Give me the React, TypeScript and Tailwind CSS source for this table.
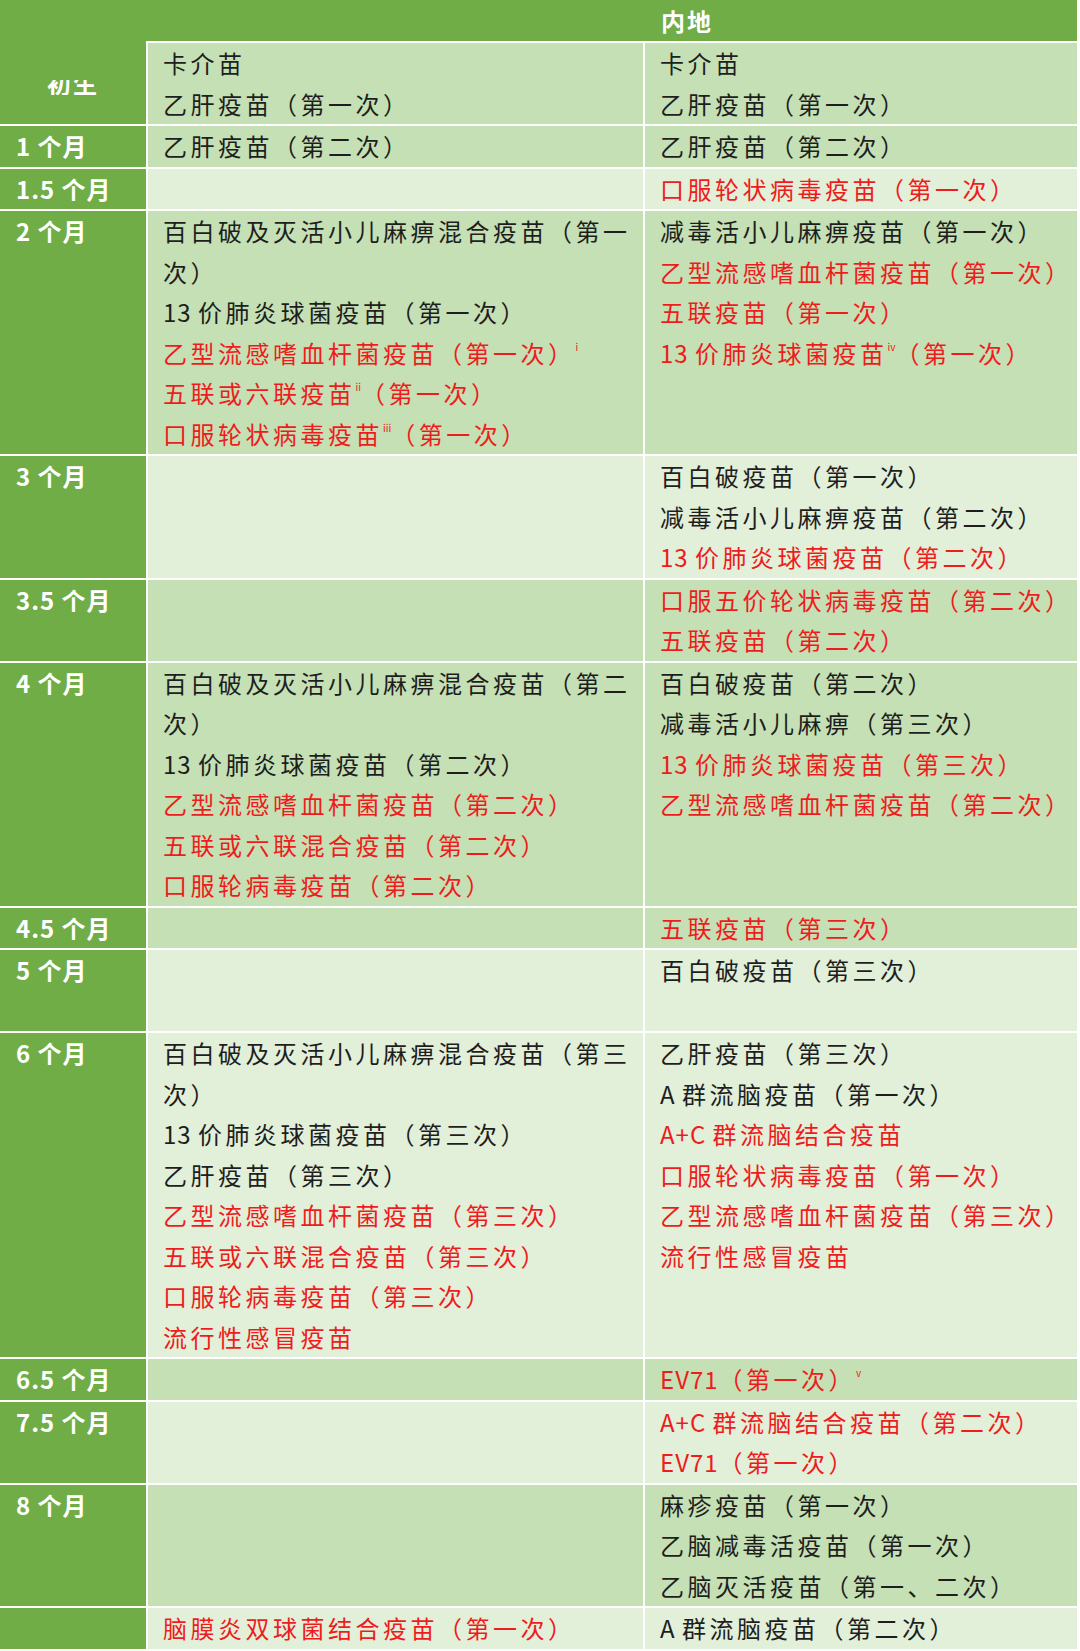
type Line = { t: string; red?: boolean; sup?: string; rest?: string };
type Row = { label: string; tone: "m" | "l"; n: number; left: Line[]; right: Line[] };

const k = (t: string): Line => ({ t });
const r = (t: string, sup?: string, rest?: string): Line => ({ t, red: true, sup, rest });

const rows: Row[] = [
  { label: "1 个月", tone: "m", n: 1, left: [k("乙肝疫苗（第二次）")], right: [k("乙肝疫苗（第二次）")] },
  { label: "1.5 个月", tone: "l", n: 1, left: [], right: [r("口服轮状病毒疫苗（第一次）")] },
  {
    label: "2 个月",
    tone: "m",
    n: 6,
    left: [
      k("百白破及灭活小儿麻痹混合疫苗（第一"),
      k("次）"),
      k("13 价肺炎球菌疫苗（第一次）"),
      r("乙型流感嗜血杆菌疫苗（第一次）", "i"),
      r("五联或六联疫苗", "ii", "（第一次）"),
      r("口服轮状病毒疫苗", "iii", "（第一次）"),
    ],
    right: [
      k("减毒活小儿麻痹疫苗（第一次）"),
      r("乙型流感嗜血杆菌疫苗（第一次）"),
      r("五联疫苗（第一次）"),
      r("13 价肺炎球菌疫苗", "iv", "（第一次）"),
    ],
  },
  {
    label: "3 个月",
    tone: "l",
    n: 3,
    left: [],
    right: [k("百白破疫苗（第一次）"), k("减毒活小儿麻痹疫苗（第二次）"), r("13 价肺炎球菌疫苗（第二次）")],
  },
  {
    label: "3.5 个月",
    tone: "m",
    n: 2,
    left: [],
    right: [r("口服五价轮状病毒疫苗（第二次）"), r("五联疫苗（第二次）")],
  },
  {
    label: "4 个月",
    tone: "m",
    n: 6,
    left: [
      k("百白破及灭活小儿麻痹混合疫苗（第二"),
      k("次）"),
      k("13 价肺炎球菌疫苗（第二次）"),
      r("乙型流感嗜血杆菌疫苗（第二次）"),
      r("五联或六联混合疫苗（第二次）"),
      r("口服轮病毒疫苗（第二次）"),
    ],
    right: [
      k("百白破疫苗（第二次）"),
      k("减毒活小儿麻痹（第三次）"),
      r("13 价肺炎球菌疫苗（第三次）"),
      r("乙型流感嗜血杆菌疫苗（第二次）"),
    ],
  },
  { label: "4.5 个月", tone: "m", n: 1, left: [], right: [r("五联疫苗（第三次）")] },
  { label: "5 个月", tone: "l", n: 2, left: [], right: [k("百白破疫苗（第三次）")] },
  {
    label: "6 个月",
    tone: "l",
    n: 8,
    left: [
      k("百白破及灭活小儿麻痹混合疫苗（第三"),
      k("次）"),
      k("13 价肺炎球菌疫苗（第三次）"),
      k("乙肝疫苗（第三次）"),
      r("乙型流感嗜血杆菌疫苗（第三次）"),
      r("五联或六联混合疫苗（第三次）"),
      r("口服轮病毒疫苗（第三次）"),
      r("流行性感冒疫苗"),
    ],
    right: [
      k("乙肝疫苗（第三次）"),
      k("A 群流脑疫苗（第一次）"),
      r("A+C 群流脑结合疫苗"),
      r("口服轮状病毒疫苗（第一次）"),
      r("乙型流感嗜血杆菌疫苗（第三次）"),
      r("流行性感冒疫苗"),
    ],
  },
  { label: "6.5 个月", tone: "m", n: 1, left: [], right: [r("EV71（第一次）", "v")] },
  {
    label: "7.5 个月",
    tone: "l",
    n: 2,
    left: [],
    right: [r("A+C 群流脑结合疫苗（第二次）"), r("EV71（第一次）")],
  },
  {
    label: "8 个月",
    tone: "m",
    n: 3,
    left: [],
    right: [k("麻疹疫苗（第一次）"), k("乙脑减毒活疫苗（第一次）"), k("乙脑灭活疫苗（第一、二次）")],
  },
  {
    label: "",
    tone: "l",
    n: 1,
    left: [r("脑膜炎双球菌结合疫苗（第一次）")],
    right: [k("A 群流脑疫苗（第二次）")],
  },
];

// latin runs (13, A+C, EV71) are set tighter than the CJK glyphs
function Txt({ s }: { s: string }) {
  return (
    <>
      {s.split(/([A-Za-z0-9+ ]+)/).map((p, i) =>
        /[A-Za-z0-9+ ]/.test(p) ? (
          <span key={i} className="tracking-[1px]">
            {p}
          </span>
        ) : (
          p
        )
      )}
    </>
  );
}

function Cell({ lines, tone, top }: { lines: Line[]; tone: "m" | "l"; top?: boolean }) {
  return (
    <div
      className={`${tone === "m" ? "bg-[#c5e0b4]" : "bg-[#e2efd9]"} ${
        top ? "border-t-2 border-white" : ""
      } pl-[15px] overflow-hidden`}
    >
      {lines.map((l, i) => (
        <div
          key={i}
          className={`whitespace-nowrap h-[40.5px] leading-[40.5px] ${
            l.red ? "text-[#ee1c1c]" : "text-[#1e1e1e]"
          }`}
        >
          <Txt s={l.t} />
          {l.sup && (
            <span className="relative -top-[12px] text-[10px] leading-none tracking-normal">{l.sup}</span>
          )}
          {l.rest}
        </div>
      ))}
    </div>
  );
}

export default function App() {
  return (
    <div className="w-[1080px] h-[1651px] overflow-hidden bg-white font-['Noto_Sans_CJK_SC','Noto_Sans',sans-serif] text-[24px] tracking-[3.5px]">
      <div className="w-[1077px] flex flex-col gap-[2px]">
        <div className="flex flex-col">
          <div className="grid grid-cols-[146px_495px_432px] gap-x-[2px] h-[41px] bg-[#70ad47]">
            <div />
            <div />
            <div className="pl-[16px] pt-[3px] leading-[36px] text-white font-bold tracking-[2px]">内地</div>
          </div>
          <div className="grid grid-cols-[146px_495px_432px] gap-x-[2px] h-[83px]">
            <div className="bg-[#70ad47] flex justify-center pt-[39px]">
              <div className="h-[15px] overflow-hidden">
                <div className="-mt-[9px] leading-[24px] text-white font-bold tracking-[2px]">初生</div>
              </div>
            </div>
            <Cell lines={[k("卡介苗"), k("乙肝疫苗（第一次）")]} tone="m" top />
            <Cell lines={[k("卡介苗"), k("乙肝疫苗（第一次）")]} tone="m" top />
          </div>
        </div>
        {rows.map((row, i) => (
          <div
            key={i}
            className="grid grid-cols-[146px_495px_432px] gap-x-[2px]"
            style={{ height: row.n * 40.5 }}
          >
            <div className="bg-[#70ad47] pl-[16px] leading-[40.5px] text-white font-bold tracking-[1px] whitespace-nowrap">
              {row.label}
            </div>
            <Cell lines={row.left} tone={row.tone} />
            <Cell lines={row.right} tone={row.tone} />
          </div>
        ))}
      </div>
    </div>
  );
}
